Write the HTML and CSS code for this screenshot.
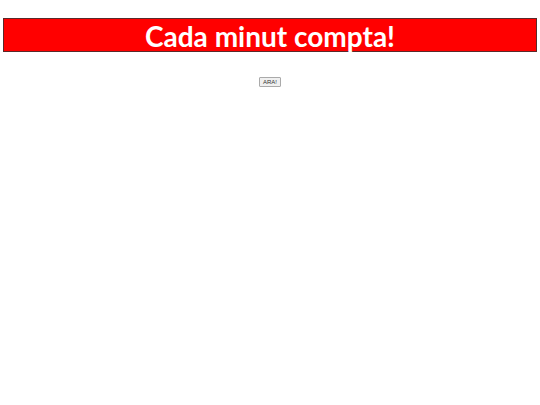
FILE: index.html
```html
<!DOCTYPE html>
<html lang="ca">
<head>
  <meta charset="UTF-8">
  <meta name="viewport" content="width=device-width, initial-scale=1.0">
  <title>Cada minut compta!</title>
  <link rel="stylesheet" href="styles.css">
</head>
<body>
  <div class="header">
    <h1>Cada minut compta!</h1>
  </div>

  <div class="content">
    <button class="start-btn">ARA!</button>
  </div>
</body>
</html>
```

FILE: styles.css
```css
body {
  font-family: 'Liberation Sans', Arial, sans-serif;
  margin: 0;
  padding: 18px 3px 0;
  background: #fff;
}

.header {
  background: #ff0000;
  border: 1px solid #5a2a2a;
  text-align: center;
}

.header h1 {
  margin: 0;
  height: 32px;
  line-height: 34px;
  font-family: Lato, sans-serif;
  font-size: 28px;
  font-weight: bold;
  letter-spacing: 0;
  color: #fff;
}

.content {
  text-align: center;
  padding-top: 25px;
}

.start-btn {
  display: block;
  margin: 0 auto;
  font-family: 'Liberation Sans', Arial, sans-serif;
  font-size: 6px;
  line-height: 6px;
  padding: 1px 3px;
  background: #f0f0f0;
  border: 1px solid #aaa;
  border-radius: 1px;
  color: #333;
}
```
